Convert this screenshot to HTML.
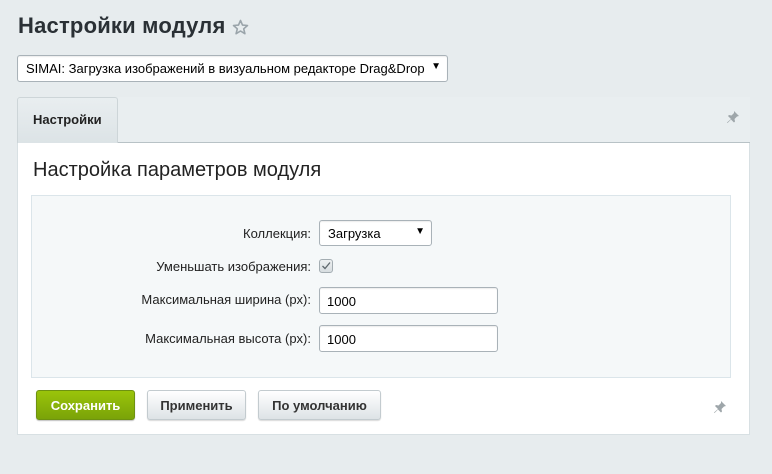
<!DOCTYPE html>
<html><head><meta charset="utf-8"><style>
*{box-sizing:border-box}
body{margin:0;width:772px;height:474px;background:#e7ecee;font-family:"Liberation Sans",Arial,sans-serif;position:relative;overflow:hidden;color:#000}
.abs{position:absolute}
h1{position:absolute;left:18px;top:13px;margin:0;font-size:22px;font-weight:bold;color:#2a3035;letter-spacing:0.2px}
.sel{position:absolute;background:#fff;border:1px solid #a9b2b8;border-radius:3px;font-size:13px;box-shadow:inset 0 1px 1px rgba(0,0,0,.08)}
.inp{position:absolute;background:#fff;border:1px solid #a9b2b8;border-radius:3px;font-size:13px;padding:6px 0 0 7px;box-shadow:inset 0 1px 1px rgba(0,0,0,.08)}
.lbl{position:absolute;right:461px;font-size:13px;color:#222;text-align:right;white-space:nowrap}
.btn{position:absolute;top:390px;height:30px;border-radius:3px;font-size:13px;font-weight:bold;text-align:center;line-height:30px}
.g{background:linear-gradient(#9ac40a,#7aa308);color:#fff;border:1px solid #6e9210;box-shadow:0 1px 1px rgba(0,0,0,.25)}
.w{background:linear-gradient(#fff,#dde3e6);color:#333;border:1px solid #c3cbcf;box-shadow:0 1px 1px rgba(0,0,0,.15)}
</style></head><body>
<h1>Настройки модуля</h1>
<svg class="abs" style="left:232px;top:19px" width="17" height="17" viewBox="0 0 17 17"><path d="M8.5 1.5l2 4.6 5 .4-3.8 3.3 1.2 4.9-4.4-2.7-4.4 2.7 1.2-4.9L1.5 6.5l5-.4z" fill="none" stroke="#9aa4aa" stroke-width="1.6" stroke-linejoin="round"/></svg>
<div class="sel" style="left:17px;top:55px;width:431px;height:27px;padding:5px 0 0 8px">SIMAI: Загрузка изображений в визуальном редакторе Drag&amp;Drop<span class="abs" style="right:6px;top:5px;font-size:10px">▼</span></div>
<div class="abs" style="left:17px;top:97px;width:733px;height:46px;background:#e9eef0;border-bottom:1px solid #b8c2c6"></div>
<div class="abs" style="left:17px;top:97px;width:101px;height:46px;background:linear-gradient(#e9eef0,#dce3e6);border:1px solid #cdd5d8;border-bottom:none;border-radius:3px 3px 0 0;font-size:13px;font-weight:bold;color:#222;padding:14px 0 0 15px">Настройки</div>
<svg class="abs" style="left:725px;top:109px" width="16" height="16" viewBox="0 0 16 16"><path d="M9 2l5 5-2 .5-2.5 2.5.5 2.5-1 1-3-3-3.5 3.5-.5-.5L6 10 3 7l1-1 2.5.5L9 4z" fill="#9ea6aa"/></svg>
<div class="abs" style="left:17px;top:143px;width:733px;height:292px;background:#fff;border:1px solid #d8e0e3;border-top:none"></div>
<div class="abs" style="left:33px;top:159px;font-size:20px;color:#222">Настройка параметров модуля</div>
<div class="abs" style="left:31px;top:195px;width:700px;height:183px;background:#f5f8f9;border:1px solid #dbe5ea"></div>
<div class="lbl" style="top:226px">Коллекция:</div>
<div class="sel" style="left:319px;top:220px;width:113px;height:26px;padding:5px 0 0 8px">Загрузка<span class="abs" style="right:6px;top:5px;font-size:10px">▼</span></div>
<div class="lbl" style="top:259px">Уменьшать изображения:</div>
<div class="abs" style="left:319px;top:259px;width:14px;height:14px;border:1px solid #a4adb2;border-radius:3px;background:linear-gradient(#eef1f2,#d7dde0)"><svg width="12" height="12" viewBox="0 0 12 12" style="position:absolute;left:0;top:0"><path d="M2.5 6l2.5 2.5L10 2.5" fill="none" stroke="#5f686d" stroke-width="1.3"/></svg></div>
<div class="lbl" style="top:292px">Максимальная ширина (px):</div>
<div class="inp" style="left:319px;top:287px;width:179px;height:27px">1000</div>
<div class="lbl" style="top:331px">Максимальная высота (px):</div>
<div class="inp" style="left:319px;top:325px;width:179px;height:27px">1000</div>
<div class="btn g" style="left:36px;width:99px">Сохранить</div>
<div class="btn w" style="left:147px;width:99px">Применить</div>
<div class="btn w" style="left:258px;width:123px">По умолчанию</div>
<svg class="abs" style="left:712px;top:399px" width="16" height="16" viewBox="0 0 16 16"><path d="M9 2l5 5-2 .5-2.5 2.5.5 2.5-1 1-3-3-3.5 3.5-.5-.5L6 10 3 7l1-1 2.5.5L9 4z" fill="#9ea6aa"/></svg>
</body></html>
